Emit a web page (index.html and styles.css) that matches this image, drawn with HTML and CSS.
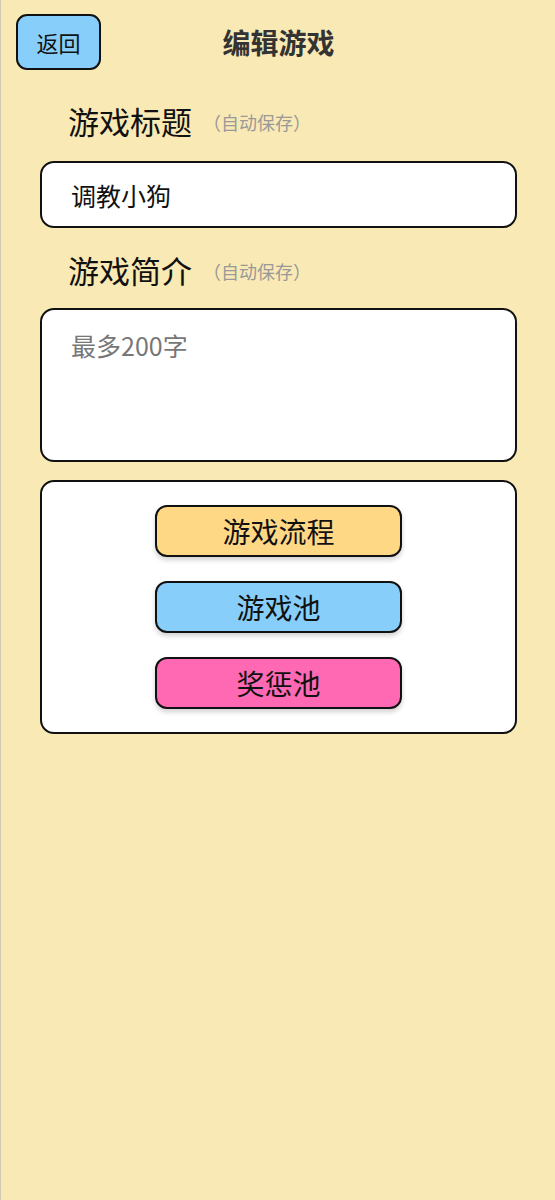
FILE: index.html
```html
<!DOCTYPE html>
<html lang="zh">
<head>
<meta charset="utf-8">
<link rel="stylesheet" href="styles.css">
</head>
<body>
<div class="page">
  <header class="header">
    <button class="back">返回</button>
    <h1 class="title">编辑游戏</h1>
  </header>
  <div class="label"><span class="label-text">游戏标题</span><span class="hint">（自动保存）</span></div>
  <div class="field input">调教小狗</div>
  <div class="label label-desc"><span class="label-text">游戏简介</span><span class="hint">（自动保存）</span></div>
  <div class="field textarea"><span class="placeholder">最多200字</span></div>
  <div class="card">
    <button class="btn btn-flow">游戏流程</button>
    <button class="btn btn-pool">游戏池</button>
    <button class="btn btn-reward">奖惩池</button>
  </div>
</div>
</body>
</html>
```

FILE: styles.css
```css
html, body {
  margin: 0;
  padding: 0;
  height: 100%;
}
body {
  background: #f9e9b4;
  font-family: "Noto Sans CJK SC", "Noto Sans", sans-serif;
  color: #111;
}
.page {
  min-height: 1200px;
  box-sizing: border-box;
  border-left: 1px solid #cfcab5;
  padding: 14px 38px 0 39px;
}
.header {
  position: relative;
  height: 56px;
  margin-left: -24px;
  display: flex;
  align-items: center;
}
.back {
  width: 85px;
  height: 56px;
  box-sizing: border-box;
  background: #87cefa;
  border: 2.5px solid #111;
  border-radius: 11px;
  font-family: inherit;
  font-size: 22px;
  color: #111;
  padding: 0;
}
.title {
  position: absolute;
  left: 0;
  right: 0;
  top: 0;
  bottom: 0;
  margin: 0;
  display: flex;
  align-items: center;
  justify-content: center;
  font-size: 28px;
  font-weight: 700;
  color: #333;
  pointer-events: none;
  padding-left: 24px;
}
.label {
  display: flex;
  align-items: center;
  padding-left: 28px;
  height: 40px;
  margin-top: 31px;
  margin-bottom: 20px;
}
.label-desc {
  margin-top: 22px;
  margin-bottom: 18px;
}
.label-text {
  font-size: 31px;
  line-height: 40px;
}
.hint {
  font-size: 18px;
  color: #999;
  margin-left: 11px;
  margin-top: 2px;
}
.field {
  box-sizing: border-box;
  background: #fff;
  border: 2.5px solid #111;
  border-radius: 14px;
  padding: 0 29px;
  font-size: 25px;
}
.input {
  height: 67px;
  display: flex;
  align-items: center;
}
.textarea {
  height: 154px;
  padding-top: 17px;
  line-height: 36px;
}
.placeholder {
  color: #777;
}
.card {
  margin-top: 18px;
  box-sizing: border-box;
  height: 254px;
  background: #fff;
  border: 2.5px solid #111;
  border-radius: 14px;
  padding-top: 22.5px;
  display: flex;
  flex-direction: column;
  align-items: center;
  gap: 24px;
}
.btn {
  width: 247px;
  height: 52px;
  box-sizing: border-box;
  border: 2.5px solid #111;
  border-radius: 12px;
  font-family: inherit;
  font-size: 28px;
  color: #111;
  padding: 0;
  box-shadow: 0 3px 5px rgba(0, 0, 0, 0.18);
}
.btn-flow { background: #ffd886; }
.btn-pool { background: #87cefa; }
.btn-reward { background: #ff69b4; }
```
